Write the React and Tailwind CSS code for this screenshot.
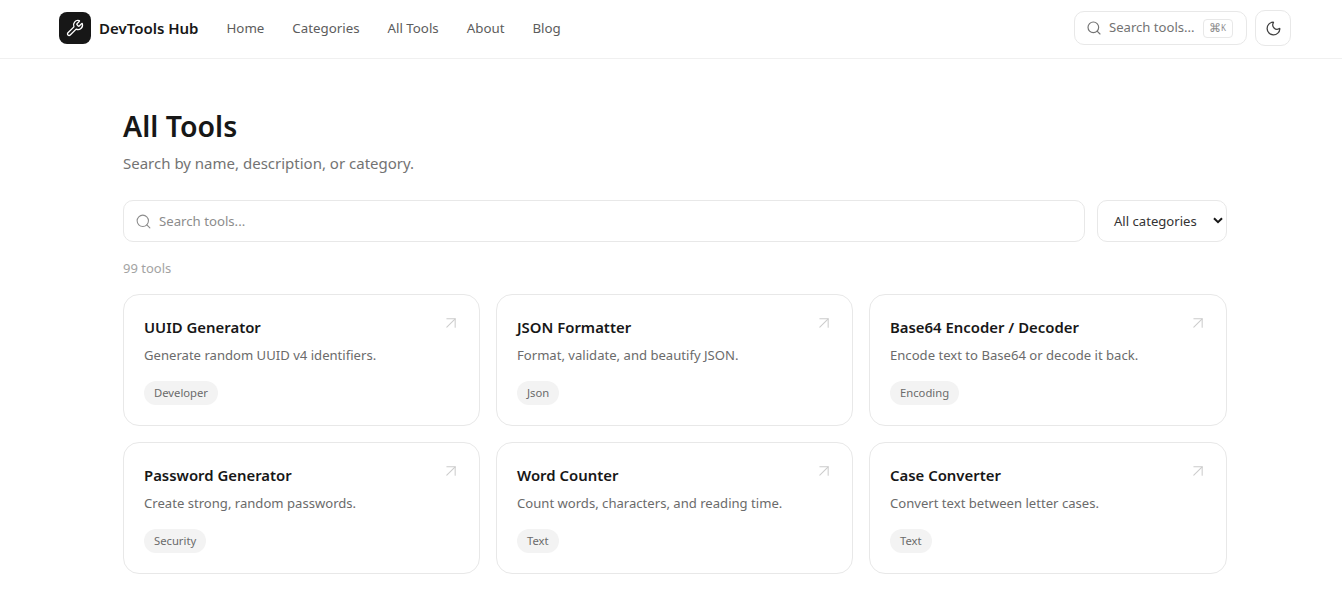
import React from "react";
import { Wrench, Search, Moon, ArrowUpRight } from "lucide-react";

const tools = [
  { name: "UUID Generator", desc: "Generate random UUID v4 identifiers.", tag: "Developer" },
  { name: "JSON Formatter", desc: "Format, validate, and beautify JSON.", tag: "Json" },
  { name: "Base64 Encoder / Decoder", desc: "Encode text to Base64 or decode it back.", tag: "Encoding" },
  { name: "Password Generator", desc: "Create strong, random passwords.", tag: "Security" },
  { name: "Word Counter", desc: "Count words, characters, and reading time.", tag: "Text" },
  { name: "Case Converter", desc: "Convert text between letter cases.", tag: "Text" },
];

const links = ["Home", "Categories", "All Tools", "About", "Blog"];

const ToolCard = ({ tool }) => (
  <div className="relative h-[132px] rounded-2xl border border-[#e8e8e8] bg-white px-5 pt-[20px]">
    <ArrowUpRight className="absolute right-[18px] top-[18px] text-[#cccccc]" size={20} strokeWidth={1.25} />
    <h3 className="text-[14.9px] leading-[24px] font-semibold text-[#171717]">{tool.name}</h3>
    <p className="mt-[6px] text-[13.1px] leading-[20px] text-[#6b6b6b]">{tool.desc}</p>
    <span className="mt-[16px] inline-block rounded-full bg-[#f3f3f3] px-[10px] text-[11.25px] leading-[24px] text-[#6b6b6b]">
      {tool.tag}
    </span>
  </div>
);

const App = () => {
  return (
    <div className="h-[589px] w-full overflow-hidden bg-white font-['Noto_Sans',sans-serif]">
      <div className="w-[1350px]">
        <header className="flex h-[59px] items-center justify-between border-b border-[#f0f0f0] px-[59px] pb-[2px]">
          <div className="flex items-center">
            <div className="flex h-8 w-8 items-center justify-center rounded-lg bg-[#171717] text-white">
              <Wrench size={18} strokeWidth={1.75} />
            </div>
            <span className="ml-2 text-[15px] font-semibold text-[#171717]">DevTools Hub</span>
            <nav className="ml-7 mt-[1px] flex gap-7">
              {links.map((link) => (
                <a key={link} className="text-[13.3px] text-[#5c5c5c]">{link}</a>
              ))}
            </nav>
          </div>
          <div className="flex items-center gap-2">
            <div className="flex h-[34px] w-[173px] items-center rounded-[10px] border border-[#e8e8e8] pl-[11px] text-[#737373]">
              <Search size={16} strokeWidth={1.75} />
              <span className="ml-[7px] text-[13.1px]">Search tools...</span>
              <span className="ml-[8px] flex h-[19px] w-[30px] items-center justify-center rounded border border-[#e8e8e8] text-[#8c8c8c]">
                <span className="text-[12px] font-light">⌘</span>
                <span className="text-[8px]">K</span>
              </span>
            </div>
            <button className="flex h-9 w-9 items-center justify-center rounded-[10px] border border-[#e8e8e8] text-[#404040]">
              <Moon size={17} strokeWidth={1.75} />
            </button>
          </div>
        </header>

        <main className="px-[123px] pt-[47px]">
          <h1 className="text-[28.5px] leading-[40px] font-semibold text-[#171717]">All Tools</h1>
          <p className="mt-[6px] text-[15px] leading-[22px] text-[#737373]">Search by name, description, or category.</p>

          <div className="mt-[26px] flex gap-3">
            <div className="flex h-[42px] flex-1 items-center rounded-[10px] border border-[#e8e8e8] pl-[11px] text-[#8c8c8c]">
              <Search size={17} strokeWidth={1.5} />
              <span className="ml-[7px] mt-[1px] text-[13.2px]">Search tools...</span>
            </div>
            <div className="flex h-[42px] w-[130px] items-center rounded-[10px] border border-[#e8e8e8] pl-4 text-[#333333]">
              <span className="mt-[1px] text-[13.1px]">All categories</span>
              <svg className="mb-[2px] ml-[16px]" width="10" height="7" viewBox="0 0 10 7" fill="none" stroke="#171717" strokeWidth="2">
                <path d="M1 1.2l4 4 4-4" />
              </svg>
            </div>
          </div>

          <p className="mt-[17px] text-[13px] leading-[18px] text-[#a3a3a3]">99 tools</p>

          <div className="mt-[17px] grid grid-cols-[357px_357px_358px] gap-4">
            {tools.map((tool) => (
              <ToolCard key={tool.name} tool={tool} />
            ))}
          </div>
        </main>
      </div>
    </div>
  );
};

export default App;
